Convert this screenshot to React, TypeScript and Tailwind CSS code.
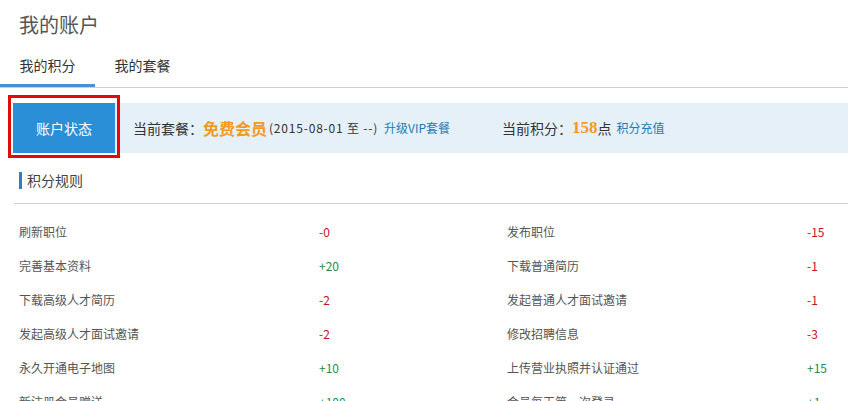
import React from 'react'

type Rule = { name: string; value: string }

const rules: Rule[] = [
  { name: '刷新职位', value: '-0' },
  { name: '发布职位', value: '-15' },
  { name: '完善基本资料', value: '+20' },
  { name: '下载普通简历', value: '-1' },
  { name: '下载高级人才简历', value: '-2' },
  { name: '发起普通人才面试邀请', value: '-1' },
  { name: '发起高级人才面试邀请', value: '-2' },
  { name: '修改招聘信息', value: '-3' },
  { name: '永久开通电子地图', value: '+10' },
  { name: '上传营业执照并认证通过', value: '+15' },
  { name: '新注册会员赠送', value: '+100' },
  { name: '会员每天第一次登录', value: '+1' },
]

function RuleRow({ rule }: { rule: Rule }) {
  const plus = rule.value.startsWith('+')
  return (
    <div className="flex items-center h-[34px] text-[12px]">
      <span className="w-[300px] text-[#555]">{rule.name}</span>
      <span className={plus ? 'text-[#1f8a4c]' : 'text-[#c8101e]'}>{rule.value}</span>
    </div>
  )
}

export default function App() {
  return (
    <div
      className="relative w-[848px] h-[401px] overflow-hidden bg-white"
      style={{ fontFamily: '"Noto Sans CJK SC", "Noto Sans", sans-serif' }}
    >
      <div className="h-[46px] pt-[11px] pl-[19px] text-[20px] leading-[28px] text-[#555]">我的账户</div>

      <div className="flex border-b border-[#d0d0d0]">
        <div className="w-[95px] h-[41px] text-center text-[14px] leading-[38px] text-[#333] border-b-[3px] border-[#4a90d9]">
          我的积分
        </div>
        <div className="w-[95px] h-[41px] text-center text-[14px] leading-[38px] text-[#333]">我的套餐</div>
      </div>

      <div className="mt-[15px] ml-[13px] h-[50px] flex items-center bg-[#e5f0f8]">
        <div className="w-[102px] h-full flex items-center justify-center bg-[#2a8fd6] text-white text-[14px]">
          账户状态
        </div>
        <div className="flex items-center pl-[18px] w-[387px] whitespace-nowrap">
          <span className="text-[14px] text-[#333]">当前套餐：</span>
          <span className="text-[16px] font-bold text-[#f39a1e]">免费会员</span>
          <span className="text-[12px] text-[#333] ml-[2px] tracking-[0.8px]">(2015-08-01 至 --)</span>
          <span className="text-[12px] text-[#1a7cb9] ml-[6px]">升级VIP套餐</span>
        </div>
        <div className="flex items-center whitespace-nowrap">
          <span className="text-[14px] text-[#333]">当前积分：</span>
          <span
            className="text-[17px] font-bold text-[#f39a1e]"
            style={{ fontFamily: '"Liberation Serif", serif' }}
          >
            158
          </span>
          <span className="text-[14px] text-[#333]">点</span>
          <span className="text-[12px] text-[#1a7cb9] ml-[5px]">积分充值</span>
        </div>
      </div>

      <div className="mt-[19px] ml-[19px] flex items-center h-[17px]">
        <div className="w-[3px] h-[17px] bg-[#2a7fc6]" />
        <span className="ml-[5px] text-[14px] text-[#444]">积分规则</span>
      </div>

      <div className="mt-[14px] ml-[14px] border-t border-[#cfcfcf]" />

      <div className="pt-[11px] pl-[19px] grid grid-cols-[488px_1fr]">
        {rules.map(r => (
          <RuleRow key={r.name} rule={r} />
        ))}
      </div>

      <div className="absolute left-[8px] top-[95px] w-[112px] h-[63px] border-[3px] border-[#e20a0a]" />
    </div>
  )
}
